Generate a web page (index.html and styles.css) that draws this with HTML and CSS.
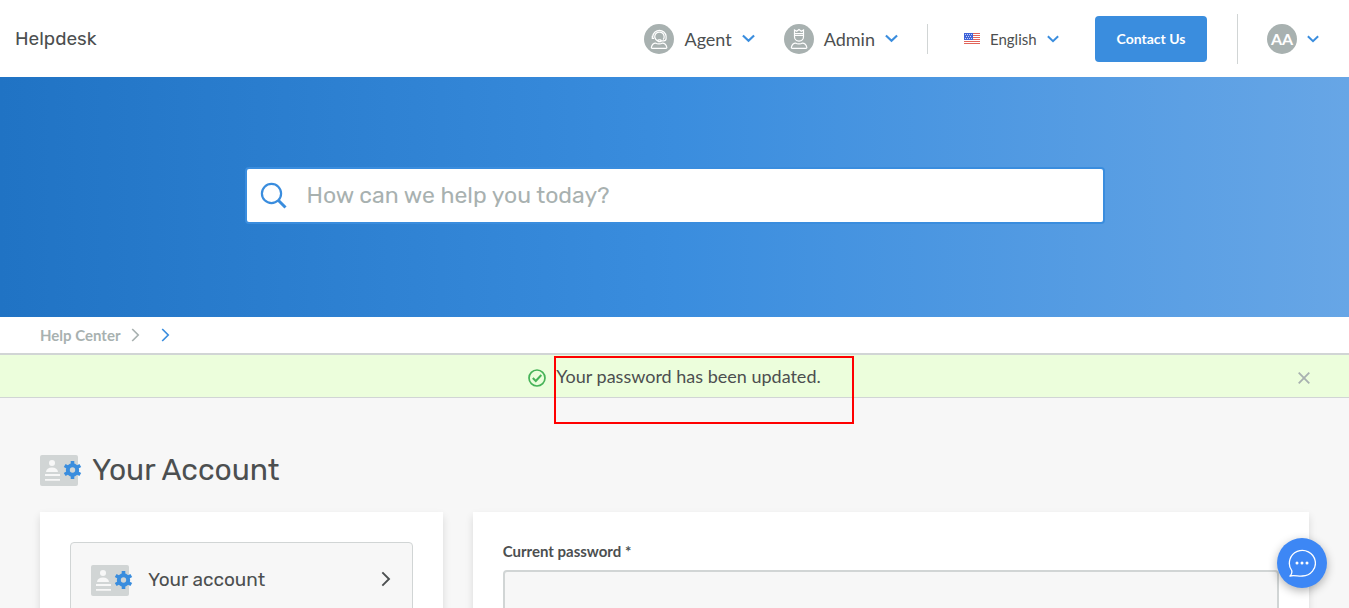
FILE: index.html
```html
<!DOCTYPE html>
<html lang="en">
<head>
<meta charset="utf-8">
<meta name="viewport" content="width=device-width, initial-scale=1">
<title>Helpdesk</title>
<link rel="stylesheet" href="styles.css">
</head>
<body>
<svg class="sprite" aria-hidden="true">
  <symbol id="chevron-down" viewBox="0 0 14 9"><path d="M1 1.200 7 7l6-5.800" fill="none" stroke="currentColor" stroke-width="2.300"/></symbol>
  <symbol id="chevron-right" viewBox="0 0 9 14"><path d="m1.200 1 6 6-6 6" fill="none" stroke="currentColor" stroke-width="1.700"/></symbol>
  <symbol id="account-card" viewBox="0 0 42 31">
    <rect width="38" height="31" rx="2" fill="#d1d5d5"/>
    <circle cx="12" cy="8" r="3" fill="#f7f7f7"/>
    <path d="M6 17c.3-3 2.500-4.500 6-4.500s5.700 1.500 6 4.500zM5 19h15v2H5zM5 24h15v1.700H5z" fill="#f7f7f7"/>
    <g fill="#3a8dde">
      <path d="M30.700 6h3.600v18h-3.600z"/>
      <path d="M30.700 6h3.600v18h-3.600z" transform="rotate(60 32.500 15)"/>
      <path d="M30.700 6h3.600v18h-3.600z" transform="rotate(120 32.500 15)"/>
      <circle cx="32.500" cy="15" r="6.700"/>
    </g>
    <circle cx="32.500" cy="15" r="2.700" fill="#d1d5d5"/>
  </symbol>
</svg>
<div class="app">
  <header class="topbar">
    <a class="brand" href="#">Helpdesk</a>
    <nav class="topnav" aria-label="Main">
      <button class="menu" type="button" aria-haspopup="true">
        <svg class="avatar" viewBox="0 0 30 30" aria-hidden="true">
          <circle cx="15" cy="15" r="15" fill="#a8b1b0"/>
          <g fill="none" stroke="#fff" stroke-width="1.200">
            <path d="M8.800 13.500v-1.300a6.700 6.700 0 0 1 13.300 0v2.300c0 1.400-1 2.400-2.400 2.400h-3.200"/>
            <path d="M10.800 14v-1.800a4.700 4.700 0 0 1 9.300 0v1.300c0 .8-.4 1.500-1 2M10.800 13c.3 2 1.600 3.600 3.500 4"/>
            <path d="M8.300 11.700v2.600h1.800"/>
            <rect x="14" y="15.900" width="3" height="1.800" rx=".8"/>
            <path d="M8.300 24.400c-.7 0-1-.4-.9-1 .5-3 2.500-4.300 4.400-4.300 1 1 5.400 1 6.400 0 2.100 0 4.100 1.300 4.600 4.300.1.600-.3 1-.9 1z"/>
          </g>
        </svg>
        <span>Agent</span>
        <svg class="chevron-lg" aria-hidden="true"><use href="#chevron-down"/></svg>
      </button>
      <button class="menu" type="button" aria-haspopup="true">
        <svg class="avatar" viewBox="0 0 30 30" aria-hidden="true">
          <circle cx="15" cy="15" r="15" fill="#a8b1b0"/>
          <g fill="none" stroke="#fff" stroke-width="1.200">
            <path d="M10.500 9.500V6l2.200 1.300L15 5.500l2.300 1.800L19.500 6v3.500z"/>
            <path d="M10.500 9.500v3.300c0 2.500 1.900 4.400 4.500 4.400s4.500-1.900 4.500-4.400V9.500M10.500 11.300h9"/>
            <path d="M8.300 24.400c-.7 0-1-.4-.9-1 .5-3 2.500-4.300 4.400-4.300 1 1 5.400 1 6.400 0 2.100 0 4.100 1.300 4.600 4.300.1.600-.3 1-.9 1z"/>
          </g>
        </svg>
        <span>Admin</span>
        <svg class="chevron-lg" aria-hidden="true"><use href="#chevron-down"/></svg>
      </button>
      <div class="language">
        <svg class="flag" viewBox="0 0 16 11" aria-hidden="true">
          <path fill="#fff" d="M0 0h16v11H0z"/>
          <path fill="#e2645a" d="M0 0h16v1H0zM0 2h16v1H0zM0 4h16v1H0zM0 6h16v1H0zM0 8h16v1H0zM0 10h16v1H0z"/>
          <path fill="#3f63d8" d="M0 0h9v7H0z"/>
          <path fill="#c5d2f8" d="M1 1h1v1H1zM3 1h1v1H3zM5 1h1v1H5zM7 1h1v1H7zM2 3h1v1H2zM4 3h1v1H4zM6 3h1v1H6zM1 5h1v1H1zM3 5h1v1H3zM5 5h1v1H5zM7 5h1v1H7z"/>
        </svg>
        <select class="language-select" aria-label="Language"><option>English</option></select>
        <svg class="chevron-sm" aria-hidden="true"><use href="#chevron-down"/></svg>
      </div>
      <button class="contact" type="button">Contact Us</button>
      <button class="profile" type="button" aria-haspopup="true">
        <span class="initials">AA</span>
        <svg class="chevron-sm" aria-hidden="true"><use href="#chevron-down"/></svg>
      </button>
    </nav>
  </header>

  <section class="hero">
    <form class="search" role="search">
      <svg class="search-icon" viewBox="0 0 27 27" aria-hidden="true"><g fill="none" stroke="#3a8dde"><circle cx="11.500" cy="11.500" r="9.600" stroke-width="2.200"/><path d="m18.500 18.500 7 7" stroke-width="3"/></g></svg>
      <input class="search-input" type="search" aria-label="Search" placeholder="How can we help you today?">
    </form>
  </section>

  <nav class="breadcrumb" aria-label="Breadcrumb">
    <a class="crumb" href="#">Help Center</a>
    <svg class="crumb-arrow" aria-hidden="true"><use href="#chevron-right"/></svg>
    <svg class="crumb-arrow current" aria-hidden="true"><use href="#chevron-right"/></svg>
  </nav>

  <div class="alert" role="status">
    <svg class="alert-icon" viewBox="0 0 18 18" aria-hidden="true"><g fill="none" stroke="#46b358"><circle cx="9" cy="9" r="8" stroke-width="1.700"/><path d="m4.800 9 3 3 5.500-6" stroke-width="2"/></g></svg>
    <p class="alert-text">Your password has been updated.<span class="marker"></span></p>
    <button class="close" type="button" aria-label="Close"><svg class="close-icon" viewBox="0 0 12 12"><path d="m.7.700 10.600 10.600M11.300.7.700 11.300" stroke="#a8b1b0" stroke-width="1.800"/></svg></button>
  </div>

  <main class="content">
    <h1 class="title"><svg class="account-icon" aria-hidden="true"><use href="#account-card"/></svg>Your Account</h1>
    <div class="columns">
      <aside class="card">
        <a class="side-link" href="#">
          <svg class="account-icon" aria-hidden="true"><use href="#account-card"/></svg>
          <span class="side-label">Your account</span>
          <svg class="side-arrow" aria-hidden="true"><use href="#chevron-right"/></svg>
        </a>
      </aside>
      <section class="card">
        <label class="label" for="current-password">Current password *</label>
        <input class="field" id="current-password" type="password">
      </section>
    </div>
  </main>
</div>
<button class="chat" type="button" aria-label="Open chat">
  <svg class="chat-icon" viewBox="0 0 28 28" aria-hidden="true"><path d="M2 27c1.600-1.500 2.200-3.500 1.700-5.500A13 12.800 0 1 1 14.500 27C11 27.500 6 26 2 27z" fill="none" stroke="#fff" stroke-width="1.300" stroke-linejoin="round"/><g fill="#fff"><circle cx="9" cy="14" r="1.500"/><circle cx="14" cy="14" r="1.500"/><circle cx="19" cy="14" r="1.500"/></g></svg>
</button>
</body>
</html>
```
FILE: styles.css
```css
* { box-sizing: border-box; }
body {
  margin: 0;
  background: #f7f7f7;
  color: #4c4f50;
  font: 16px/24px Lato, "Liberation Sans", sans-serif;
}
button, input, select { font: inherit; color: inherit; }
button { padding: 0; border: 0; background: none; cursor: pointer; }
a { color: inherit; text-decoration: none; }
svg { flex: none; }
.sprite { position: absolute; width: 0; height: 0; }
.app { height: 100vh; overflow: hidden; }

.topbar {
  display: flex;
  align-items: center;
  justify-content: space-between;
  height: 77px;
  padding: 0 30px 0 15px;
  background: #fff;
}
.brand { font: 19px/24px Rubik, Roboto, sans-serif; }
.topnav { display: flex; align-items: center; }
.menu { display: flex; align-items: center; gap: 10px; margin-right: 29px; font-size: 18px; }
.avatar { width: 30px; height: 30px; }
.chevron-lg { width: 13px; height: 9px; color: #3a8dde; }
.chevron-sm { width: 12px; height: 8px; color: #3a8dde; }
.language {
  display: flex;
  align-items: center;
  gap: 10px;
  height: 30px;
  margin-right: 36px;
  padding-left: 36px;
  border-left: 1px solid #d1d5d5;
}
.flag { width: 16px; height: 11px; }
.language-select { appearance: none; padding: 0; border: 0; background: none; font-size: 15px; }
.contact {
  width: 112px;
  height: 46px;
  border-radius: 4px;
  background: #3a8dde;
  color: #fff;
  font-size: 14px;
  font-weight: 700;
}
.profile {
  display: flex;
  align-items: center;
  gap: 10px;
  height: 50px;
  margin-left: 30px;
  padding-left: 29px;
  border-left: 1px solid #d1d5d5;
}
.initials {
  width: 30px;
  border-radius: 50%;
  background: #a8b1b0;
  color: #fff;
  font-size: 16px;
  line-height: 30px;
  font-weight: 700;
}

.hero {
  display: flex;
  align-items: center;
  justify-content: center;
  height: 240px;
  padding: 0 20px 4px;
  background: linear-gradient(90deg, #2073c4 0%, #3a8dde 50%, #67a6e6 100%);
}
.search {
  display: flex;
  align-items: center;
  gap: 20px;
  width: 100%;
  max-width: 860px;
  height: 57px;
  padding: 0 13px;
  border: 2px solid #3a8dde;
  border-radius: 4px;
  background: #fff;
}
.search-icon { width: 27px; height: 27px; }
.search-input {
  flex: 1;
  min-width: 0;
  padding: 0;
  border: 0;
  outline: 0;
  background: none;
  font: 23px/30px Rubik, Roboto, sans-serif;
}
.search-input::placeholder { color: #a8b1b0; opacity: 1; }

.breadcrumb {
  display: flex;
  align-items: center;
  gap: 11px;
  height: 38px;
  padding-left: 40px;
  border-bottom: 2px solid #d1d5d5;
  background: #fff;
  color: #a8b1b0;
  font-size: 15px;
  font-weight: 700;
}
.crumb-arrow { width: 9px; height: 14px; }
.crumb-arrow.current { margin-left: 10px; color: #3a8dde; }

.alert {
  position: relative;
  display: flex;
  align-items: center;
  justify-content: center;
  gap: 10px;
  height: 43px;
  border-bottom: 1px solid #d1d5d5;
  background: #ecfedc;
}
.alert-icon { width: 18px; height: 18px; margin-top: 3px; }
.alert-text { position: relative; margin: 0; font-size: 18px; }
.marker {
  position: absolute;
  top: -8px;
  left: -2px;
  width: 300px;
  height: 68px;
  border: 2px solid #f00;
}
.close { position: absolute; top: 17px; right: 39px; display: flex; }
.close-icon { width: 12px; height: 12px; }

.content { padding: 52px 40px 0; }
.title {
  display: flex;
  align-items: center;
  gap: 10px;
  margin: 0 0 22px;
  font: 400 30px/40px Rubik, Roboto, sans-serif;
}
.account-icon { width: 42px; height: 31px; }
.columns { display: grid; grid-template-columns: 13fr 27fr; gap: 30px; }
.card {
  min-height: 400px;
  padding: 30px;
  background: #fff;
  box-shadow: 0 4px 8px rgba(0, 0, 0, .12);
}
.side-link {
  display: flex;
  align-items: center;
  gap: 15px;
  height: 76px;
  padding: 0 21px 0 20px;
  border: 1px solid #d1d5d5;
  border-radius: 4px;
  background: #f7f7f7;
}
.side-label { flex: 1; font: 19px/24px Rubik, Roboto, sans-serif; }
.side-arrow { width: 10px; height: 16px; margin-bottom: 3px; }
.label { display: block; margin-bottom: 10px; font-size: 15px; line-height: 18px; font-weight: 700; }
.field {
  width: 100%;
  height: 50px;
  padding: 0 15px;
  border: 2px solid #d1d5d5;
  border-radius: 4px;
  background: #f7f7f7;
}
.chat {
  position: fixed;
  right: 22px;
  bottom: 20px;
  display: flex;
  align-items: center;
  justify-content: center;
  width: 50px;
  height: 50px;
  border-radius: 50%;
  background: #3d87f5;
  box-shadow: 0 3px 10px rgba(0, 0, 0, .3);
}
.chat-icon { width: 28px; height: 28px; }
```
